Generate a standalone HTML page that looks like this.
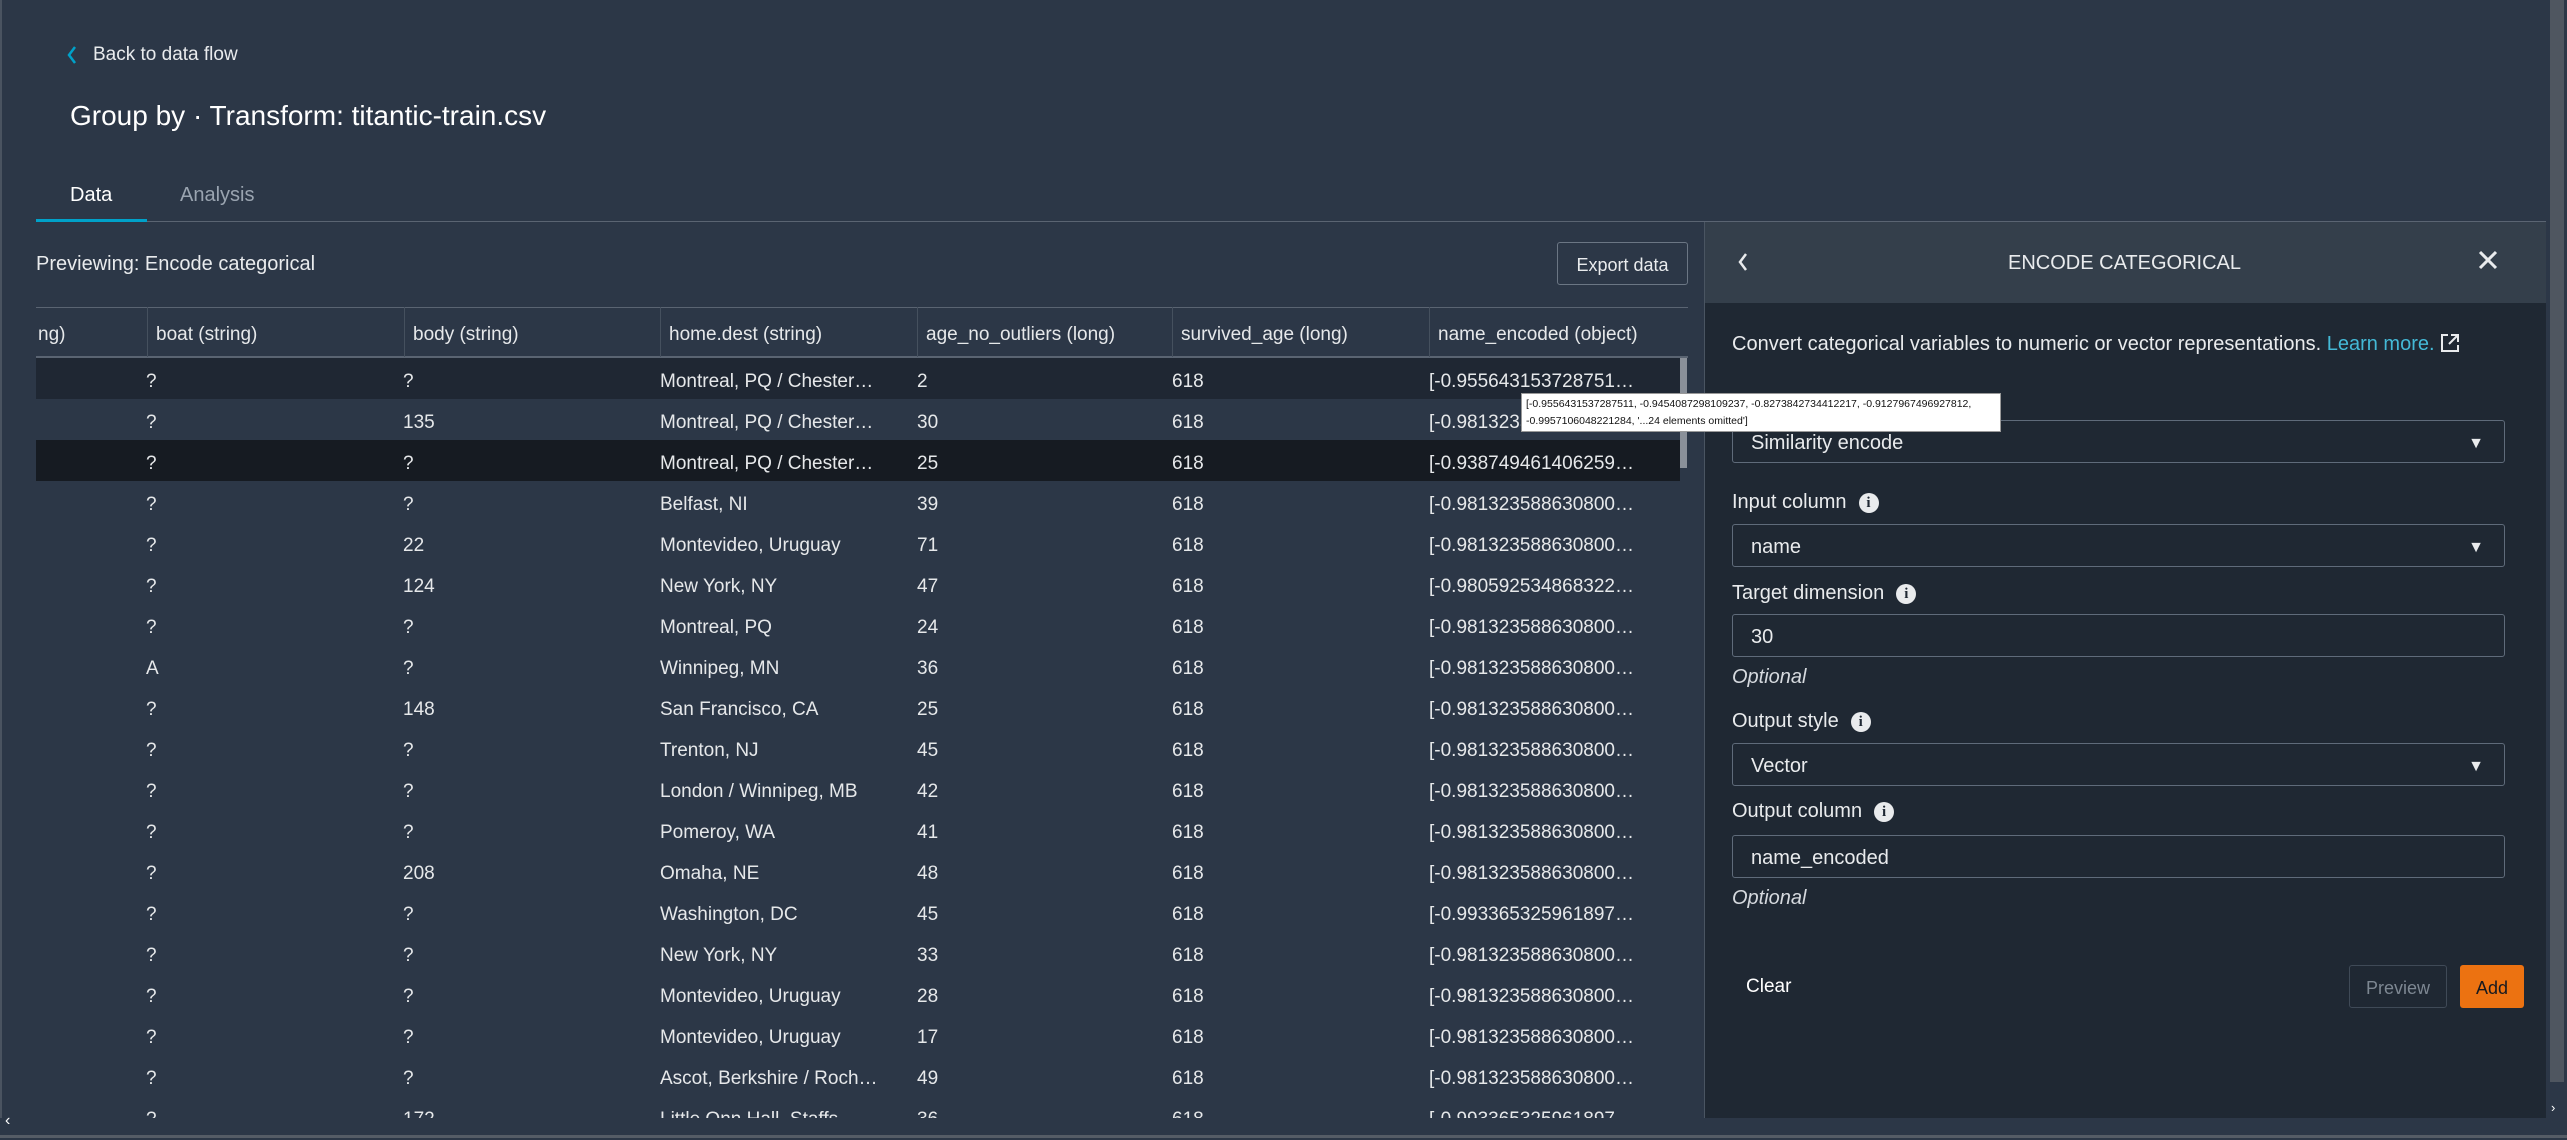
<!DOCTYPE html>
<html><head><meta charset="utf-8"><style>
*{box-sizing:border-box;margin:0;padding:0}
body{width:2567px;height:1138px;overflow:hidden;background:#2c3747;font-family:"Liberation Sans",sans-serif;color:#e9ebed;position:relative}
.a{position:absolute;white-space:nowrap}
.cell{position:absolute;font-size:19px;line-height:41px;color:#e6e8ea;white-space:nowrap;padding-top:3px}
.hd{position:absolute;top:307px;height:50px;line-height:50px;font-size:19px;padding-left:8px;padding-top:3px;border-left:1px solid #45505e;color:#e6e8ea}
.lbl{position:absolute;left:1732px;font-size:20px;color:#e9ebed}
.info{display:inline-block;width:20px;height:20px;border-radius:50%;background:#e9ebed;color:#1f2833;font-size:15px;font-weight:bold;text-align:center;line-height:20px;margin-left:12px;vertical-align:1px;font-family:"Liberation Serif",serif}
.fld{position:absolute;left:1732px;width:773px;height:43px;border:1px solid #5f6b7a;border-radius:3px;background:#1f2833;font-size:20px;line-height:41px;padding-left:18px;padding-top:2px;color:#e9ebed}
.fld .ar{position:absolute;right:20px;top:2px;font-size:16px}
.opt{position:absolute;left:1732px;font-size:20px;font-style:italic;color:#d5d9de}
</style></head><body>
<div style="position:absolute;left:0;top:0;width:2px;height:1138px;background:#4a5360"></div>
<svg class="a" style="left:66px;top:45px" width="12" height="20" viewBox="0 0 12 20"><path d="M9 2 L3 10 L9 18" stroke="#00a1c9" stroke-width="2.5" fill="none"/></svg>
<div class="a" style="left:93px;top:44px;font-size:19px;color:#e9ebed">Back to data flow</div>
<div class="a" style="left:70px;top:100px;font-size:28px;color:#fff">Group by · Transform: titantic-train.csv</div>
<div class="a" style="left:70px;top:184px;font-size:20px;color:#fff">Data</div>
<div class="a" style="left:180px;top:184px;font-size:20px;color:#9aa4b0">Analysis</div>
<div style="position:absolute;left:36px;top:221px;width:2531px;height:1px;background:#5a6472"></div>
<div style="position:absolute;left:36px;top:219px;width:111px;height:3px;background:#00a1c9"></div>
<div class="a" style="left:36px;top:253px;font-size:20px;color:#e9ebed">Previewing: Encode categorical</div>
<div class="a" style="left:1557px;top:242px;width:131px;height:43px;border:1px solid #6b7684;border-radius:3px;font-size:18px;line-height:41px;padding-top:2px;text-align:center;color:#e9ebed">Export data</div>
<!-- table -->
<div style="position:absolute;left:36px;top:307px;width:1652px;height:1px;background:#5a6472"></div>
<div style="position:absolute;left:36px;top:356px;width:1652px;height:2px;background:#5a6472"></div>
<div style="position:absolute;left:36px;top:358px;width:1644px;height:41px;background:#1f2733"></div>
<div style="position:absolute;left:36px;top:440px;width:1644px;height:41px;background:#161b22"></div>
<div class="hd" style="left:30px;border:0">ng)</div>
<div class="hd" style="left:147px">boat (string)</div>
<div class="hd" style="left:404px">body (string)</div>
<div class="hd" style="left:660px">home.dest (string)</div>
<div class="hd" style="left:917px">age_no_outliers (long)</div>
<div class="hd" style="left:1172px">survived_age (long)</div>
<div class="hd" style="left:1429px">name_encoded (object)</div>
<div style="position:absolute;left:1680px;top:358px;width:7px;height:110px;background:#8a9099"></div>
<div id="rows"></div>
<div style="position:absolute;left:0;top:1118px;width:1704px;height:17px;background:#2c3747"></div>
<div class="a" style="left:5px;top:1112px;font-size:16px;color:#fff">&#8249;</div>
<div style="position:absolute;left:0;top:1135px;width:2567px;height:3px;background:#555c66"></div>
<!-- panel -->
<div style="position:absolute;left:1704px;top:222px;width:842px;height:896px;background:#1f2833;border-left:1px solid #4a5562"></div>
<div style="position:absolute;left:1705px;top:222px;width:841px;height:81px;background:#343f4b"></div>
<svg class="a" style="left:1737px;top:252px" width="12" height="20" viewBox="0 0 12 20"><path d="M9 2 L3 10 L9 18" stroke="#e9ebed" stroke-width="2.5" fill="none"/></svg>
<div class="a" style="left:2008px;top:252px;font-size:20px;color:#e9ebed">ENCODE CATEGORICAL</div>
<svg class="a" style="left:2478px;top:250px" width="20" height="20" viewBox="0 0 20 20"><path d="M2 2 L18 18 M18 2 L2 18" stroke="#e9ebed" stroke-width="3"/></svg>
<div class="a" style="left:1732px;top:333px;font-size:20px;color:#e9ebed">Convert categorical variables to numeric or vector representations. <span style="color:#44b9d6">Learn more.</span> <svg width="20" height="20" viewBox="0 0 20 20" style="vertical-align:-3px"><path d="M8 2 H2 V18 H18 V12 M11 2 H18 V9 M18 2 L9 11" stroke="#e9ebed" stroke-width="2" fill="none"/></svg></div>
<div class="lbl" style="top:407px">Transform<span class="info">i</span></div>
<div class="fld" style="top:420px">Similarity encode<span class="ar">&#9660;</span></div>
<div class="lbl" style="top:491px">Input column<span class="info">i</span></div>
<div class="fld" style="top:524px">name<span class="ar">&#9660;</span></div>
<div class="lbl" style="top:582px">Target dimension<span class="info">i</span></div>
<div class="fld" style="top:614px">30</div>
<div class="opt" style="top:666px">Optional</div>
<div class="lbl" style="top:710px">Output style<span class="info">i</span></div>
<div class="fld" style="top:743px">Vector<span class="ar">&#9660;</span></div>
<div class="lbl" style="top:800px">Output column<span class="info">i</span></div>
<div class="fld" style="top:835px">name_encoded</div>
<div class="opt" style="top:887px">Optional</div>
<div class="a" style="left:1746px;top:976px;font-size:19px;color:#fff">Clear</div>
<div class="a" style="left:2349px;top:965px;width:98px;height:43px;border:1px solid #3f4a57;border-radius:3px;font-size:18px;line-height:41px;padding-top:2px;text-align:center;color:#7d8792">Preview</div>
<div class="a" style="left:2460px;top:965px;width:64px;height:43px;background:#ec7211;border-radius:3px;font-size:18px;line-height:43px;padding-top:2px;text-align:center;color:#16191f">Add</div>
<div style="position:absolute;left:2546px;top:0;width:21px;height:1135px;background:#2c3747"></div>
<div style="position:absolute;left:2550px;top:0;width:14px;height:1082px;background:#4f5660"></div>
<div class="a" style="left:2551px;top:1100px;font-size:13px;color:#fff">&#8250;</div>
<!-- tooltip -->
<div class="a" style="left:1521px;top:393px;width:480px;height:39px;background:#fff;border:1px solid #999;color:#111;font-size:10.5px;line-height:17px;padding:2px 4px;white-space:normal">[-0.9556431537287511, -0.9454087298109237, -0.8273842734412217, -0.9127967496927812, -0.9957106048221284, '...24 elements omitted']</div>
<script>
var d=[["?","?","Montreal, PQ / Chester…","2","[-0.955643153728751…"],["?","135","Montreal, PQ / Chester…","30","[-0.981323588630800…"],["?","?","Montreal, PQ / Chester…","25","[-0.938749461406259…"],["?","?","Belfast, NI","39",""],["?","22","Montevideo, Uruguay","71",""],["?","124","New York, NY","47","[-0.980592534868322…"],["?","?","Montreal, PQ","24",""],["A","?","Winnipeg, MN","36",""],["?","148","San Francisco, CA","25",""],["?","?","Trenton, NJ","45",""],["?","?","London / Winnipeg, MB","42",""],["?","?","Pomeroy, WA","41",""],["?","208","Omaha, NE","48",""],["?","?","Washington, DC","45","[-0.993365325961897…"],["?","?","New York, NY","33",""],["?","?","Montevideo, Uruguay","28",""],["?","?","Montevideo, Uruguay","17",""],["?","?","Ascot, Berkshire / Roch…","49",""],["?","172","Little Onn Hall, Staffs","36","[-0.993365325961897…"]];
var h="",xs=[146,403,660,917,1172,1429];
d.forEach(function(r,i){var t=358+41*i;var v=[r[0],r[1],r[2],r[3],"618",r[4]||"[-0.981323588630800…"];
v.forEach(function(s,j){h+='<div class="cell" style="left:'+xs[j]+'px;top:'+t+'px">'+s+'</div>';});});
document.getElementById("rows").innerHTML=h;
</script>
</body></html>
